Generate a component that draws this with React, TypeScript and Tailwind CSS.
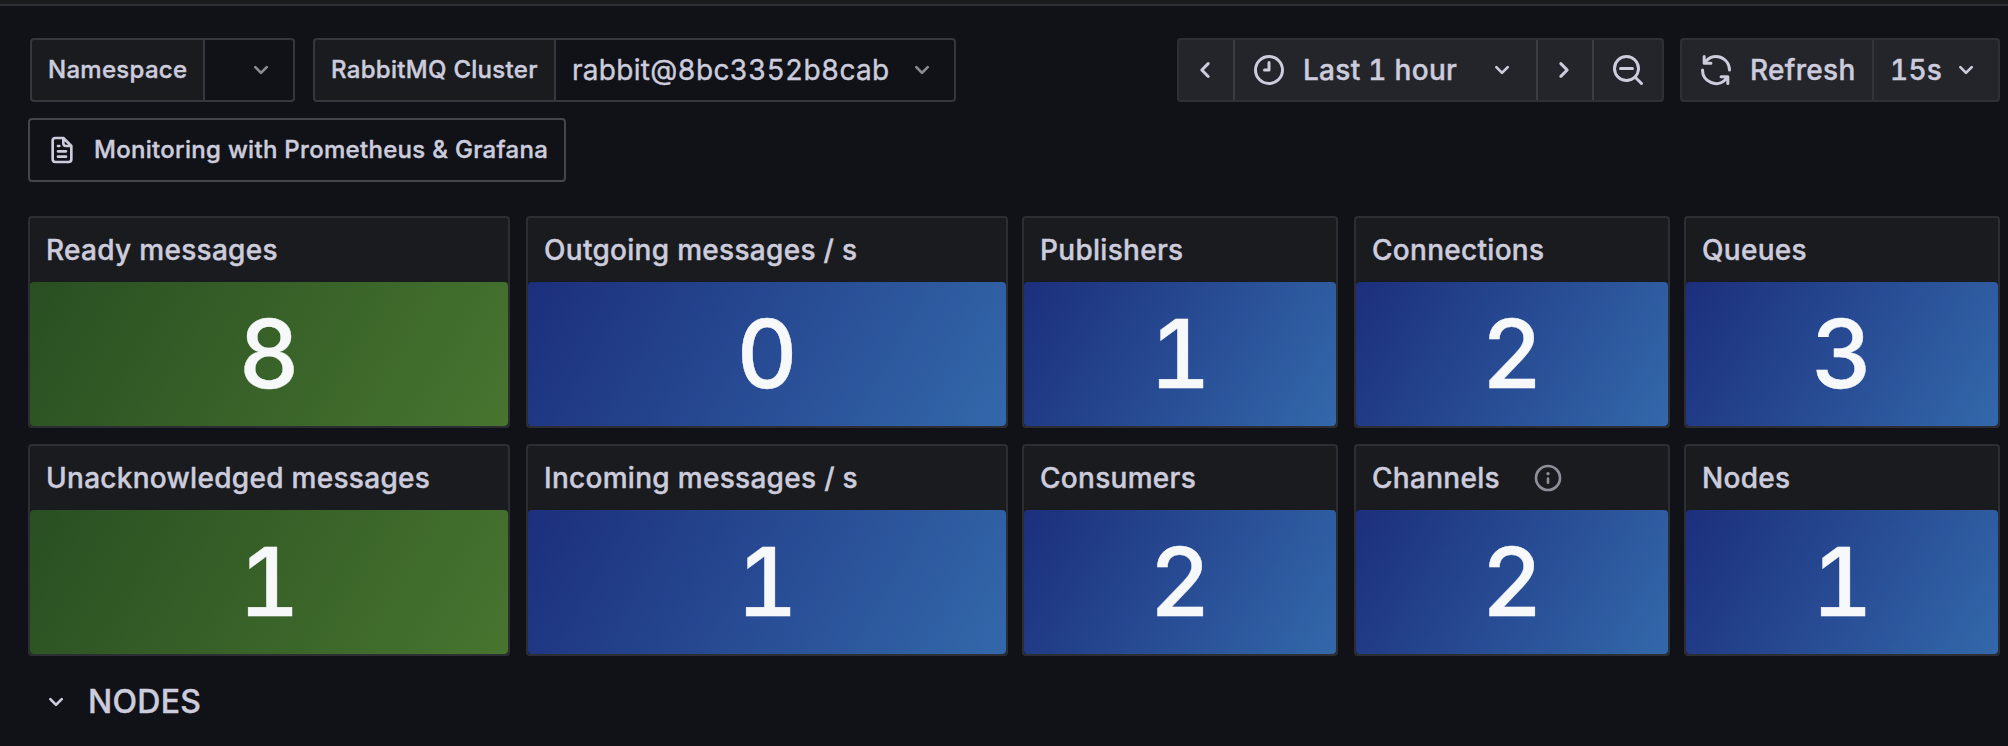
import React from "react";

const ICONS = {
  down: "M17,9.17a1,1,0,0,0-1.41,0L12,12.71,8.46,9.17a1,1,0,0,0-1.41,0,1,1,0,0,0,0,1.42l4.24,4.24a1,1,0,0,0,1.42,0L17,10.59A1,1,0,0,0,17,9.17Z",
  left: "M11.29,12l3.54-3.54a1,1,0,0,0,0-1.41,1,1,0,0,0-1.42,0L9.17,11.29a1,1,0,0,0,0,1.42L13.41,17a1,1,0,0,0,.71.29,1,1,0,0,0,.71-.29,1,1,0,0,0,0-1.41Z",
  right: "M14.83,11.29,10.59,7.05a1,1,0,0,0-1.42,0,1,1,0,0,0,0,1.41L12.71,12,9.17,15.54a1,1,0,0,0,0,1.41,1,1,0,0,0,.71.29,1,1,0,0,0,.71-.29l4.24-4.24A1,1,0,0,0,14.83,11.29Z",
  clock: "M12,6a1,1,0,0,0-1,1v4H9a1,1,0,0,0,0,2h3a1,1,0,0,0,1-1V7A1,1,0,0,0,12,6Zm0-4A10,10,0,1,0,22,12,10,10,0,0,0,12,2Zm0,18a8,8,0,1,1,8-8A8,8,0,0,1,12,20Z",
  zoomOut: "M21.71,20.29,18,16.61A9,9,0,1,0,16.61,18l3.68,3.68a1,1,0,0,0,1.42,0A1,1,0,0,0,21.71,20.29ZM11,18a7,7,0,1,1,7-7A7,7,0,0,1,11,18Zm4-8H7a1,1,0,0,0,0,2h8a1,1,0,0,0,0-2Z",
  sync: "M19.91,15.51H15.38a1,1,0,0,0,0,2h2.4A8,8,0,0,1,4,12a1,1,0,0,0-2,0,10,10,0,0,0,16.88,7.23V21a1,1,0,0,0,2,0V16.5A1,1,0,0,0,19.91,15.51ZM12,2A10,10,0,0,0,5.12,4.77V3a1,1,0,0,0-2,0V7.5a1,1,0,0,0,1,1h4.5a1,1,0,0,0,0-2H6.22A8,8,0,0,1,20,12a1,1,0,0,0,2,0A10,10,0,0,0,12,2Z",
  file: "M9,10h1a1,1,0,0,0,0-2H9a1,1,0,0,0,0,2Zm0,2a1,1,0,0,0,0,2h6a1,1,0,0,0,0-2ZM20,8.94a1.31,1.31,0,0,0-.06-.27l0-.09a1.07,1.07,0,0,0-.19-.28h0l-6-6h0a1.07,1.07,0,0,0-.28-.19.32.32,0,0,0-.09,0A.88.88,0,0,0,13.05,2H7A3,3,0,0,0,4,5V19a3,3,0,0,0,3,3H17a3,3,0,0,0,3-3V9S20,9,20,8.94ZM14,5.41,16.59,8H15a1,1,0,0,1-1-1ZM18,19a1,1,0,0,1-1,1H7a1,1,0,0,1-1-1V5A1,1,0,0,1,7,4h5V7a3,3,0,0,0,3,3h3Zm-3-3H9a1,1,0,0,0,0,2h6a1,1,0,0,0,0-2Z",
  info: "M12,2A10,10,0,1,0,22,12,10,10,0,0,0,12,2Zm0,18a8,8,0,1,1,8-8A8,8,0,0,1,12,20Zm0-8.5a1,1,0,0,0-1,1v3a1,1,0,0,0,2,0v-3A1,1,0,0,0,12,11.5Zm0-4a1.25,1.25,0,1,0,1.25,1.25A1.25,1.25,0,0,0,12,7.5Z",
};

function Icon({ name, className = "size-8" }: { name: keyof typeof ICONS; className?: string }) {
  return (
    <svg viewBox="0 0 24 24" fill="currentColor" stroke="none" className={`shrink-0 ${className}`}>
      <path d={ICONS[name]} />
    </svg>
  );
}

function Variable({ label, labelClass, value, valueClass }: { label: string; labelClass: string; value?: string; valueClass: string }) {
  return (
    <div className="flex h-16">
      <div className={`flex items-center rounded-l-[4px] border-2 border-[#36373d] bg-[#1a1b1f] pl-4 text-2xl font-medium ${labelClass}`}>
        {label}
      </div>
      <div className={`flex items-center justify-between rounded-r-[4px] border-2 border-l-0 border-[#36373d] bg-[#111217] pr-4 pl-4 text-[28px] ${valueClass}`}>
        <span>{value}</span>
        <Icon name="down" className="size-8 text-[#8b8b91]" />
      </div>
    </div>
  );
}

type Stat = { title: string; value: number; green?: boolean; info?: boolean };

const ROWS: Stat[][] = [
  [
    { title: "Ready messages", value: 8, green: true },
    { title: "Outgoing messages / s", value: 0 },
    { title: "Publishers", value: 1 },
    { title: "Connections", value: 2 },
    { title: "Queues", value: 3 },
  ],
  [
    { title: "Unacknowledged messages", value: 1, green: true },
    { title: "Incoming messages / s", value: 1 },
    { title: "Consumers", value: 2 },
    { title: "Channels", value: 2, info: true },
    { title: "Nodes", value: 1 },
  ],
];

const COLUMNS = ["w-[482px]", "w-[482px]", "w-[316px]", "w-[316px]", "w-[316px]"];

function StatPanel({ stat, width }: { stat: Stat; width: string }) {
  return (
    <section className={`flex h-[212px] flex-col rounded-[4px] border-2 border-[#2d2e33] bg-[#1a1b1f] ${width}`}>
      <h2 className="flex h-16 shrink-0 items-center pl-4 text-[28px] font-medium">
        {stat.title}
        {stat.info && <Icon name="info" className="ml-8 size-8 text-[#8f8f9b]" />}
      </h2>
      <div
        className={`flex flex-1 items-center justify-center rounded-[4px] text-[94.5px] leading-none font-medium tracking-normal text-[#f7f8fa] ${
          stat.green
            ? "bg-[linear-gradient(120deg,#294f22,#47752f)]"
            : "bg-[linear-gradient(120deg,#1c2f7d,#3368ab)]"
        }`}
      >
        {stat.value}
      </div>
    </section>
  );
}

export default function App() {
  return (
    <div className="flex h-[746px] w-[2008px] flex-col overflow-hidden bg-[#111217] font-[Inter,sans-serif] tracking-[0.29px] text-[#ccccdc] tabular-nums [-webkit-text-stroke:0.4px]">
      <div className="h-1.5 shrink-0 border-b-2 border-[#2e2f34] bg-[#1a1b1f]" />
      <header className="mt-8 flex h-16 shrink-0 justify-between pr-2 pl-[30px]">
        <div className="flex gap-[18px]">
          <Variable label="Namespace" labelClass="w-[175px]" valueClass="w-[90px]" />
          <Variable label="RabbitMQ Cluster" labelClass="w-[243px]" value="rabbit@8bc3352b8cab" valueClass="w-[400px]" />
        </div>
        <div className="flex gap-4 text-[28px] font-medium">
          <div className="flex w-[487px] rounded-[4px] border-2 border-[#2f3035] bg-[#24252b]">
            <button className="flex w-[56px] items-center justify-center border-r-2 border-[#3c3d43] pr-0.5">
              <Icon name="left" className="size-9" />
            </button>
            <button className="flex w-[303px] items-center border-r-2 border-[#3c3d43] pl-4">
              <Icon name="clock" className="size-9" />
              <span className="ml-4">Last 1 hour</span>
              <Icon name="down" className="mr-[18px] ml-auto size-8" />
            </button>
            <button className="flex w-[56px] items-center justify-center border-r-2 border-[#3c3d43] pr-0.5">
              <Icon name="right" className="size-9" />
            </button>
            <button className="flex flex-1 items-center justify-center">
              <Icon name="zoomOut" className="size-9" />
            </button>
          </div>
          <div className="flex w-80 rounded-[4px] border-2 border-[#2f3035] bg-[#24252b]">
            <button className="flex w-[192px] items-center border-r-2 border-[#33343a] pl-4">
              <Icon name="sync" className="size-9" />
              <span className="ml-4">Refresh</span>
            </button>
            <button className="flex flex-1 items-center pl-4">
              <span>15s</span>
              <Icon name="down" className="mr-4 ml-auto size-8" />
            </button>
          </div>
        </div>
      </header>
      <a className="mt-4 ml-7 flex h-16 w-[538px] shrink-0 items-center rounded-[4px] border-2 border-[#45464b] pl-4 text-2xl font-medium">
        <Icon name="file" />
        <span className="ml-4">Monitoring with Prometheus &amp; Grafana</span>
      </a>
      <main className="mt-[34px] grid shrink-0 grid-cols-[498px_496px_332px_330px_316px] gap-y-4 pl-7">
        {ROWS.flatMap((row) =>
          row.map((stat, j) => <StatPanel key={stat.title} stat={stat} width={COLUMNS[j]} />)
        )}
      </main>
      <div className="mt-[14px] ml-10 flex h-16 shrink-0 items-center text-[32px] font-medium">
        <Icon name="down" />
        <h2 className="ml-4">NODES</h2>
      </div>
    </div>
  );
}
